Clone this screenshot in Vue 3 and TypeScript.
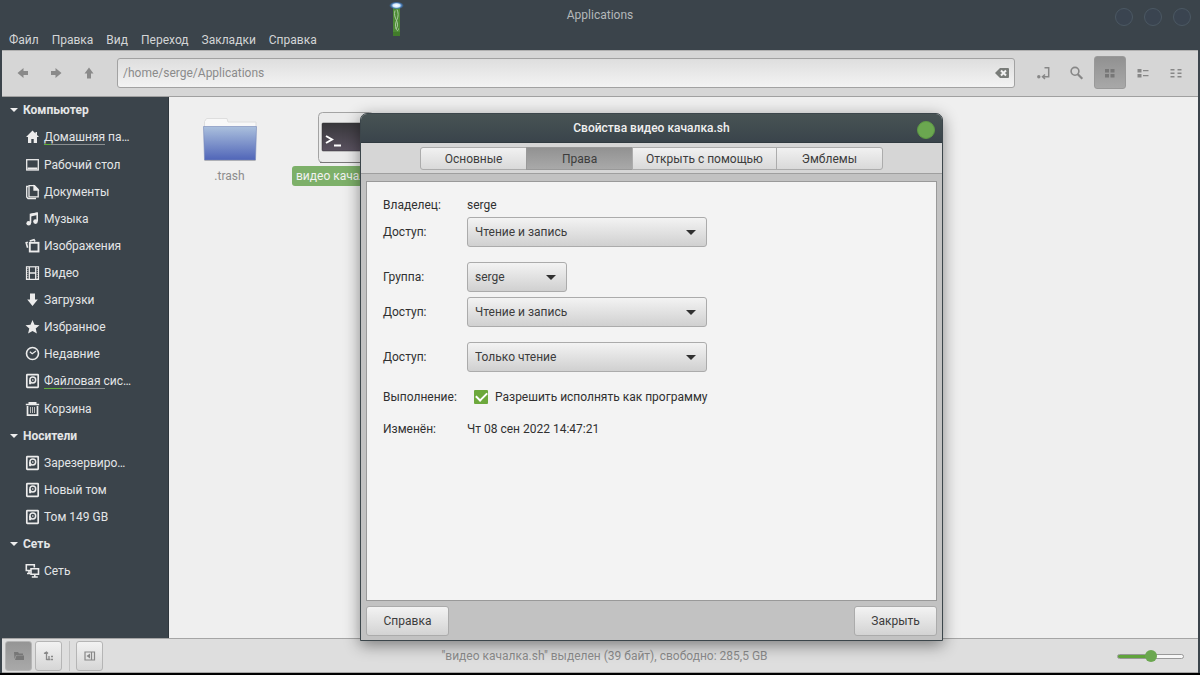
<script setup lang="ts">
import { ref } from 'vue'

interface Place {
  label: string
  icon: string
  usage?: number
}
interface Section {
  title: string
  places: Place[]
}

const menus: string[] = ['Файл', 'Правка', 'Вид', 'Переход', 'Закладки', 'Справка']

const sections: Section[] = [
  {
    title: 'Компьютер',
    places: [
      { label: 'Домашняя па…', icon: 'home', usage: 12 },
      { label: 'Рабочий стол', icon: 'desktop' },
      { label: 'Документы', icon: 'documents' },
      { label: 'Музыка', icon: 'music' },
      { label: 'Изображения', icon: 'pictures' },
      { label: 'Видео', icon: 'video' },
      { label: 'Загрузки', icon: 'download' },
      { label: 'Избранное', icon: 'star' },
      { label: 'Недавние', icon: 'recent' },
      { label: 'Файловая сис…', icon: 'drive', usage: 30 },
      { label: 'Корзина', icon: 'trash' },
    ],
  },
  {
    title: 'Носители',
    places: [
      { label: 'Зарезервиро…', icon: 'drive' },
      { label: 'Новый том', icon: 'drive' },
      { label: 'Том 149 GB', icon: 'drive' },
    ],
  },
  { title: 'Сеть', places: [{ label: 'Сеть', icon: 'network' }] },
]

const tabs: string[] = ['Основные', 'Права', 'Открыть с помощью', 'Эмблемы']
const activeTab = ref('Права')
const access: string[] = ['Чтение и запись', 'Только чтение', 'Нет']

const path = ref('/home/serge/Applications')
const ownerAccess = ref('Чтение и запись')
const group = ref('serge')
const groupAccess = ref('Чтение и запись')
const otherAccess = ref('Только чтение')
const executable = ref(true)
const zoom = ref(50)
</script>

<template>
  <div class="window">
    <header class="head">
      <div class="titlebar">
        <h1>Applications</h1>
        <div class="controls">
          <button aria-label="Свернуть"></button>
          <button aria-label="Развернуть"></button>
          <button aria-label="Закрыть окно"></button>
        </div>
      </div>
      <nav class="menubar">
        <button v-for="m in menus" :key="m">{{ m }}</button>
      </nav>
      <svg class="torch" width="16" height="38" viewBox="0 0 16 38" aria-hidden="true">
        <defs>
          <radialGradient id="glow">
            <stop offset="0" stop-color="#fff" />
            <stop offset=".45" stop-color="#d4e9ff" />
            <stop offset=".7" stop-color="#4a87cc" stop-opacity=".8" />
            <stop offset="1" stop-color="#3b6ba8" stop-opacity="0" />
          </radialGradient>
        </defs>
        <rect x="4" y="6" width="7" height="30" rx="1" fill="#4d8a35" />
        <rect x="4" y="32" width="7" height="4" fill="#427c2b" />
        <path d="M6 10.500c-1.200 4 0 7 1.500 10s1.500 6-.5 8.500M8 9.500c1.500 3 1.500 7 0 10s-2 6-1 9 2.500 2.500 2.500 0" fill="none" stroke="#a9c9a0" stroke-width="1" />
        <ellipse cx="7.500" cy="5.500" rx="7.500" ry="4" fill="url(#glow)" />
      </svg>
    </header>

    <div class="toolbar">
      <div class="tools">
        <button aria-label="Назад">
          <svg width="16" height="16" viewBox="0 0 16 16"><path d="M2.500 8 8.500 3v3H13v4H8.500v3z" fill="#8a8a8a" /></svg>
        </button>
        <button aria-label="Вперёд">
          <svg width="16" height="16" viewBox="0 0 16 16"><path d="M13.500 8l-6-5v3H3v4h4.500v3z" fill="#8a8a8a" /></svg>
        </button>
        <button aria-label="Вверх">
          <svg width="16" height="16" viewBox="0 0 16 16"><path d="M8 2.500 3.500 8.500H6V13.500h4V8.500h2.500z" fill="#8a8a8a" /></svg>
        </button>
      </div>
      <div class="entry">
        <input v-model="path" type="text" aria-label="Путь" spellcheck="false" />
        <button aria-label="Очистить">
          <svg width="16" height="14" viewBox="0 0 16 14"><path d="M1 7l5-5h8q1 0 1 1v8q0 1-1 1H6z" fill="#797c79" /><path d="M7 4.500l5 5m0-5l-5 5" stroke="#f2f2f2" stroke-width="2" /></svg>
        </button>
      </div>
      <div class="tools">
        <button aria-label="Строка адреса">
          <svg width="16" height="16" viewBox="0 0 16 16"><g fill="none" stroke="#878787" stroke-width="1.500"><path d="M8.500 2.700h4.200v9.100H7M9 9.500l-2.500 2.300L9 14" /></g><circle cx="2.800" cy="11.800" r="1.700" fill="#878787" /></svg>
        </button>
        <button aria-label="Поиск">
          <svg width="16" height="16" viewBox="0 0 16 16"><circle cx="6" cy="6.300" r="3.900" fill="none" stroke="#878787" stroke-width="1.600" /><path d="M8.800 9.200l4.500 4.500" stroke="#878787" stroke-width="2.200" /></svg>
        </button>
        <button class="on" aria-label="Значки">
          <svg width="16" height="16" viewBox="0 0 16 16" fill="#777"><path d="M3 4h4v3.500H3zM8.500 4h4v3.500h-4zM3 9h4v3.500H3zM8.500 9h4v3.500h-4z" /></svg>
        </button>
        <button aria-label="Список">
          <svg width="16" height="16" viewBox="0 0 16 16" fill="#878787"><path d="M2.500 4h4v3.500h-4zM2.500 9h4v3.500h-4zM8 5h5.500v1.300H8zM8 10h5.500v1.300H8z" /></svg>
        </button>
        <button aria-label="Таблица">
          <svg width="16" height="16" viewBox="0 0 16 16" fill="#878787"><path d="M2.500 4h4v1.500h-4zM2.500 7.500h4V9h-4zM2.500 11h4v1.500h-4zM9.500 4h4v1.500h-4zM9.500 7.500h4V9h-4zM9.500 11h4v1.500h-4z" /></svg>
        </button>
      </div>
    </div>

    <div class="content">
      <aside class="sidebar">
        <section v-for="s in sections" :key="s.title">
          <h2>
            <svg width="10" height="6" viewBox="0 0 10 6"><path d="M1 1h8L5 5z" fill="#eee" /></svg>
            {{ s.title }}
          </h2>
          <ul>
            <li v-for="p in s.places" :key="p.label">
              <a href="#" :class="{ metered: p.usage }">
                <svg width="16" height="16" viewBox="0 0 16 16" fill="none" stroke="#ececec" stroke-width="1.300">
                  <path v-if="p.icon === 'home'" d="M7.500 1.500 1 8H3v6h3.300V10h2.400v4H12V8h2L12 6V3h-1.500v1.500z" fill="#ececec" stroke="none" />
                  <template v-else-if="p.icon === 'desktop'">
                    <rect x="1.700" y="2.700" width="11.600" height="10.300" />
                    <path d="M2.500 11.500h10" stroke-width="2" />
                  </template>
                  <template v-else-if="p.icon === 'documents'">
                    <path d="M4 1.700h5.500L13.200 5.500v7.300H4z" />
                    <path d="M9 2v4h4z" fill="#ececec" />
                    <path d="M3.500 2.500H1.700v10.500l1.300 1.500H11" />
                  </template>
                  <template v-else-if="p.icon === 'music'">
                    <path d="M5.500 12V3.500l6.700-1.300V10" stroke-width="1.600" />
                    <path d="M5.500 4.200l6.700-1.400" stroke-width="2.600" />
                    <circle cx="3.700" cy="12.200" r="2.300" fill="#ececec" stroke="none" />
                    <circle cx="10.500" cy="10.600" r="2.300" fill="#ececec" stroke="none" />
                  </template>
                  <template v-else-if="p.icon === 'pictures'">
                    <rect x="4.800" y="4.800" width="8.700" height="8.700" stroke-width="1.900" />
                    <path d="M2.800 4.200 1.200 4.700l1.400 5M4.800 3l4.200-1.300 1 1.800" stroke-width="1.600" />
                  </template>
                  <template v-else-if="p.icon === 'video'">
                    <rect x="1.500" y="1.800" width="12" height="12.600" stroke-width="1.200" />
                    <path d="M4.300 2v12M10.700 2v12M4.500 8h6" />
                    <path d="M2.800 3v11M12.200 3v11" stroke-dasharray="1 1" stroke="#aaa" />
                  </template>
                  <path v-else-if="p.icon === 'download'" d="M5 1.500h5V7.500H12.800L7.500 14 2.200 7.500H5z" fill="#ececec" stroke="none" />
                  <path v-else-if="p.icon === 'star'" d="M7.500 1l2 4.700 5 .5-3.800 3.400 1.200 5-4.400-2.700-4.400 2.700 1.200-5L.5 6.200l5-.5z" fill="#ececec" stroke="none" />
                  <template v-else-if="p.icon === 'recent'">
                    <circle cx="7.500" cy="7.500" r="6" stroke-width="1.600" />
                    <path d="M4.800 5.800l2.400 2L11 5" stroke-width="1.200" />
                  </template>
                  <template v-else-if="p.icon === 'drive'">
                    <rect x="1.800" y="1.700" width="11.400" height="12.600" rx=".5" stroke-width="1.700" />
                    <circle cx="7.800" cy="7" r="2.900" stroke-width="1.500" />
                    <path d="M4.800 11V7M4.200 10.500h2" stroke-width="1.400" />
                    <circle cx="7.800" cy="7" r=".8" fill="#ececec" stroke="none" />
                  </template>
                  <template v-else-if="p.icon === 'trash'">
                    <path d="M.8 3.500h13.400M3.500 1.800h8" stroke-width="1.700" />
                    <path d="M2.500 5v9.200h10V5" stroke-width="1.700" />
                    <path d="M5.500 6v6M7.500 6v6M9.500 6v6" stroke="#bbb" stroke-width="1" />
                  </template>
                  <template v-else>
                    <path d="M6 7.500H1.300V1.800h8V4.500M4 8v2.500M2 10.500h3.500" stroke-width="1.600" />
                    <path d="M6 5.800h7.500v5.400H6zM9.800 11.500V14M6.800 14h6" stroke-width="1.600" />
                  </template>
                </svg>
                <span>{{ p.label }}</span>
                <i v-if="p.usage" class="meter"><b :style="{ width: p.usage + '%' }"></b></i>
              </a>
            </li>
          </ul>
        </section>
      </aside>

      <main class="files">
        <figure>
          <svg width="60" height="52" viewBox="0 0 60 52">
            <defs>
              <linearGradient id="folder" x2="0" y2="1">
                <stop offset="0" stop-color="#abc0dd" />
                <stop offset="1" stop-color="#5065b8" />
              </linearGradient>
            </defs>
            <path d="M4.500 15V9.500l2-3h20.500l1 3.500h28v8h-51.500z" fill="#f8f8f8" stroke="#dedede" />
            <path d="M3.500 14.500h53l-1 33.500h-51z" fill="url(#folder)" stroke="#7587b8" stroke-opacity=".6" />
            <path d="M4.500 48.500h51" stroke="#9b9b9b" stroke-opacity=".6" />
          </svg>
          <figcaption>.trash</figcaption>
        </figure>
        <figure class="selected">
          <svg width="60" height="52" viewBox="0 0 60 52">
            <defs>
              <linearGradient id="screen" x2="0" y2="1">
                <stop offset="0" stop-color="#38373b" />
                <stop offset="1" stop-color="#5a5260" />
              </linearGradient>
            </defs>
            <rect x="2.500" y=".5" width="55" height="50" rx="4" fill="#ebebeb" stroke="#a3a3a3" />
            <path d="M4 50.500h52" stroke="#777" />
            <rect x="6" y="11" width="48" height="28" rx="1" fill="url(#screen)" stroke="#333" stroke-width=".5" />
            <path d="M10 24l6 3.500-6 3.500M18 33.500h7" fill="none" stroke="#fff" stroke-width="2" />
          </svg>
          <figcaption>видео качалка.sh</figcaption>
        </figure>
      </main>
    </div>

    <footer class="statusbar">
      <div class="side-tools">
        <button class="on" aria-label="Места">
          <svg width="12" height="12" viewBox="0 0 12 12"><path d="M1 2h4l1 1.500h4V5H3L1.500 9zM3.500 5.500H11V10H2z" fill="#777" /></svg>
        </button>
        <button aria-label="Дерево">
          <svg width="12" height="12" viewBox="0 0 12 12" fill="none" stroke="#888" stroke-width="1.300"><path d="M3.500 10V2.500M1 3.500l2.500-1.500L5 3.500M3.500 9.500h4M6 6v3M8 9.500h2M8 6.500h2" /></svg>
        </button>
        <hr />
        <button aria-label="Скрыть боковую панель">
          <svg width="12" height="12" viewBox="0 0 12 12"><path d="M1 2h9.500v8H1zM7.500 2v8" fill="none" stroke="#888" stroke-width="1.200" /><path d="M6 3.500v5L2.500 6z" fill="#888" /></svg>
        </button>
      </div>
      <p>"видео качалка.sh" выделен (39 байт), свободно: 285,5 GB</p>
      <input v-model="zoom" type="range" min="0" max="100" aria-label="Масштаб" />
    </footer>

    <section class="dialog" role="dialog" aria-labelledby="dialog-title">
      <header>
        <h2 id="dialog-title">Свойства видео качалка.sh</h2>
        <button aria-label="Закрыть диалог"></button>
      </header>
      <div class="tabs" role="tablist">
        <button v-for="t in tabs" :key="t" role="tab" :aria-selected="t === activeTab" :class="{ on: t === activeTab }" @click="activeTab = t">{{ t }}</button>
      </div>
      <div class="dialog-body">
        <form class="panel" @submit.prevent>
          <div class="set">
            <div class="row"><span>Владелец:</span><span>serge</span></div>
            <div class="row">
              <label for="owner-access">Доступ:</label>
              <div class="select"><select id="owner-access" v-model="ownerAccess"><option v-for="a in access" :key="a">{{ a }}</option></select></div>
            </div>
          </div>
          <div class="set">
            <div class="row">
              <label for="group">Группа:</label>
              <div class="select short"><select id="group" v-model="group"><option>serge</option></select></div>
            </div>
            <div class="row">
              <label for="group-access">Доступ:</label>
              <div class="select"><select id="group-access" v-model="groupAccess"><option v-for="a in access" :key="a">{{ a }}</option></select></div>
            </div>
          </div>
          <div class="row">
            <label for="other-access">Доступ:</label>
            <div class="select"><select id="other-access" v-model="otherAccess"><option v-for="a in access" :key="a">{{ a }}</option></select></div>
          </div>
          <div class="row">
            <span>Выполнение:</span>
            <label class="check"><input v-model="executable" type="checkbox" />Разрешить исполнять как программу</label>
          </div>
          <div class="row"><span>Изменён:</span><span>Чт 08 сен 2022 14:47:21</span></div>
        </form>
        <div class="actions">
          <button>Справка</button>
          <button>Закрыть</button>
        </div>
      </div>
    </section>
  </div>
</template>

<style>
body {
  background: #000;
}
</style>

<style scoped>
* {
  box-sizing: border-box;
}
.window {
  position: relative;
  display: flex;
  flex-direction: column;
  min-height: 100vh;
  border-bottom: 2px solid #000;
  background: #3b444b;
  font: 12px/14px Roboto, "Noto Sans", sans-serif;
  color: #303030;
}
button,
input,
select {
  margin: 0;
  padding: 0;
  border: 0;
  background: none;
  font: inherit;
  color: inherit;
}
h1,
h2,
p,
ul,
figure {
  margin: 0;
  padding: 0;
  font: inherit;
}
svg {
  display: block;
  flex: none;
}

.head {
  height: 50px;
  color: #d3d5d6;
}
.titlebar {
  display: grid;
  grid-template-columns: 1fr auto 1fr;
  height: 30px;
}
.titlebar h1 {
  grid-column: 2;
  line-height: 30px;
  color: #b4b8ba;
}
.controls {
  display: flex;
  align-items: center;
  justify-content: flex-end;
  gap: 11px;
  padding: 3px 9px 0 0;
}
.controls button {
  width: 18px;
  height: 18px;
  border: 1px solid #4b5863;
  border-radius: 50%;
  background: #3a4450;
}
.menubar {
  display: flex;
  gap: 13px;
  padding-left: 9px;
  line-height: 20px;
}
.torch {
  position: absolute;
  top: 0;
  left: 33%;
  margin-left: -7px;
}

.toolbar {
  display: flex;
  align-items: center;
  height: 47px;
  margin: 0 2px;
  padding: 0 6px 2px 5px;
  border-top: 1px solid #b0b0b0;
  border-bottom: 1px solid #a0a0a0;
  background: #d6d6d6;
}
.tools {
  display: flex;
  gap: 1px;
}
.tools button {
  display: grid;
  place-items: center;
  width: 32px;
  height: 33px;
  border-radius: 3px;
}
.tools .on {
  border: 1px solid #999;
  background: linear-gradient(#919191, #a8a8a8);
}
.entry {
  display: flex;
  flex: 1;
  align-items: center;
  height: 30px;
  margin: 0 13px 0 12px;
  padding: 0 4px 0 5px;
  border: 1px solid #a2a2a2;
  border-radius: 3px;
  background: linear-gradient(#dedede, #f3f3f3);
  color: #8b8b8b;
}
.entry input {
  flex: 1;
  min-width: 0;
  outline: 0;
}

.content {
  display: flex;
  flex: 1;
  margin: 0 2px;
}
.sidebar {
  width: 167px;
  border-right: 1px solid #2f373d;
  background: #3b444b;
  color: #e4e6e7;
}
.sidebar h2 {
  display: flex;
  align-items: center;
  gap: 4px;
  height: 27px;
  padding: 1px 0 0 7px;
  font-weight: 700;
}
.sidebar section:first-child h2 {
  height: 26px;
  padding-top: 0;
}
.sidebar ul {
  list-style: none;
}
.sidebar a {
  position: relative;
  display: flex;
  align-items: center;
  gap: 3px;
  height: 27px;
  padding: 0 16px 0 23px;
  color: inherit;
  text-decoration: none;
}
.sidebar a.metered {
  height: 28px;
}
.sidebar span {
  white-space: nowrap;
}
.meter {
  position: absolute;
  left: 42px;
  bottom: 6px;
  width: 61px;
  height: 1px;
  background: #8b8f91;
}
.meter b {
  display: block;
  height: 1px;
  background: #5fae3c;
}

.files {
  display: flex;
  flex: 1;
  align-items: flex-start;
  gap: 9px;
  padding: 15px 7px;
  background: #efefef;
}
figure {
  display: flex;
  flex-direction: column;
  align-items: center;
  min-width: 107px;
  color: #8c8c8c;
}
figcaption {
  margin-top: 2px;
  padding: 2px 4px;
  border-radius: 3px;
  line-height: 16px;
  white-space: nowrap;
}
.selected figcaption {
  background: #7db069;
  color: #f2f2f2;
}

.statusbar {
  display: grid;
  grid-template-columns: 1fr auto 1fr;
  align-items: center;
  height: 35px;
  margin: 0 2px;
  padding: 1px 14px 0 3px;
  border-top: 1px solid #a5a5a5;
  border-bottom: 1px solid #a5a5a5;
  background: #dedede;
  color: #8b8b8b;
}
.statusbar p {
  padding-left: 20px;
}
.side-tools {
  display: flex;
  align-items: center;
  gap: 3px;
}
.side-tools button {
  display: grid;
  place-items: center;
  width: 27px;
  height: 30px;
  border: 1px solid #b5b5b5;
  border-radius: 3px;
  background: linear-gradient(#f2f2f2, #d6d6d6);
}
.side-tools .on {
  background: linear-gradient(#959595, #a9a9a9);
}
.side-tools hr {
  width: 1px;
  height: 30px;
  margin: 0 3px 0 4px;
  border: 0;
  background: #c2c2c2;
}
.statusbar > input {
  justify-self: end;
  width: 67px;
  height: 14px;
  appearance: none;
}
.statusbar > input::-webkit-slider-runnable-track {
  height: 5px;
  border: 1px solid #999;
  border-radius: 3px;
  background: linear-gradient(90deg, #61a43d 50%, #f7f7f7 50%);
}
.statusbar > input::-webkit-slider-thumb {
  width: 12px;
  height: 12px;
  margin-top: -5px;
  border-radius: 50%;
  background: #6ba750;
  appearance: none;
}

.dialog {
  position: absolute;
  top: 113px;
  left: 30%;
  width: 583px;
  border: 1px solid #3c464b;
  border-radius: 7px 7px 0 0;
  background: #c2c2c2;
  box-shadow: 0 4px 16px rgb(0 0 0 / 45%);
}
.dialog > header {
  display: grid;
  grid-template-columns: 1fr auto 1fr;
  align-items: center;
  height: 29px;
  border-radius: 6px 6px 0 0;
  border-bottom: 1px solid #303a40;
  background: linear-gradient(#485354, #3a444b);
  color: #f0f0f0;
}
.dialog h2 {
  grid-column: 2;
  font-weight: 500;
}
.dialog > header button {
  justify-self: end;
  width: 18px;
  height: 18px;
  margin: 4px 7px 0 0;
  border: 1px solid #5d9944;
  border-radius: 50%;
  background: #6ba750;
}
.tabs {
  display: flex;
  justify-content: center;
  padding: 4px 0 3px;
  border-bottom: 1px solid #9f9f9f;
  background: #d6d6d6;
}
.tabs button {
  min-width: 107px;
  height: 23px;
  padding: 0 13px;
  border: 1px solid #acacac;
  background: linear-gradient(#f1f1f1, #d9d9d9);
  color: #3c3c3c;
  white-space: nowrap;
}
.tabs button + button {
  margin-left: -1px;
}
.tabs button:first-child {
  border-radius: 3px 0 0 3px;
}
.tabs button:last-child {
  border-radius: 0 3px 3px 0;
}
.tabs .on {
  border-color: #999;
  background: linear-gradient(#929292, #a9a9a9);
}
.dialog-body {
  padding: 7px 5px 4px;
}
.panel {
  display: flex;
  flex-direction: column;
  gap: 15px;
  min-height: 420px;
  padding: 16px;
  border: 1px solid #999;
  background: #f3f3f3;
}
.set {
  display: flex;
  flex-direction: column;
  gap: 5px;
}
.row {
  display: grid;
  grid-template-columns: 84px 1fr;
  align-items: center;
}
.select {
  position: relative;
  width: 240px;
}
.short {
  width: 100px;
}
select {
  display: block;
  width: 100%;
  height: 30px;
  padding: 0 7px;
  border: 1px solid #ababab;
  border-radius: 3px;
  background: linear-gradient(#f3f3f3, #d0d0d0);
  color: #3c3c3c;
  appearance: none;
}
.select::after {
  position: absolute;
  top: 13px;
  right: 11px;
  border: 5px solid transparent;
  border-top-color: #303030;
  border-bottom-width: 0;
  content: "";
  pointer-events: none;
}
.check {
  display: flex;
  align-items: center;
  gap: 7px;
  height: 20px;
  padding-left: 7px;
}
.check input {
  display: grid;
  place-items: center;
  width: 14px;
  height: 14px;
  border-radius: 1px;
  background: #f8f8f8;
  appearance: none;
}
.check input:checked {
  background: #6ca83c;
}
.check input:checked::after {
  width: 9px;
  height: 5px;
  margin-bottom: 3px;
  border: solid #fff;
  border-width: 0 0 2px 2px;
  content: "";
  transform: rotate(-45deg);
}
.actions {
  display: flex;
  justify-content: space-between;
  padding-top: 5px;
}
.actions button {
  width: 83px;
  height: 30px;
  border: 1px solid #ababab;
  border-radius: 3px;
  background: linear-gradient(#f3f3f3, #d3d3d3);
  color: #3c3c3c;
}
</style>
